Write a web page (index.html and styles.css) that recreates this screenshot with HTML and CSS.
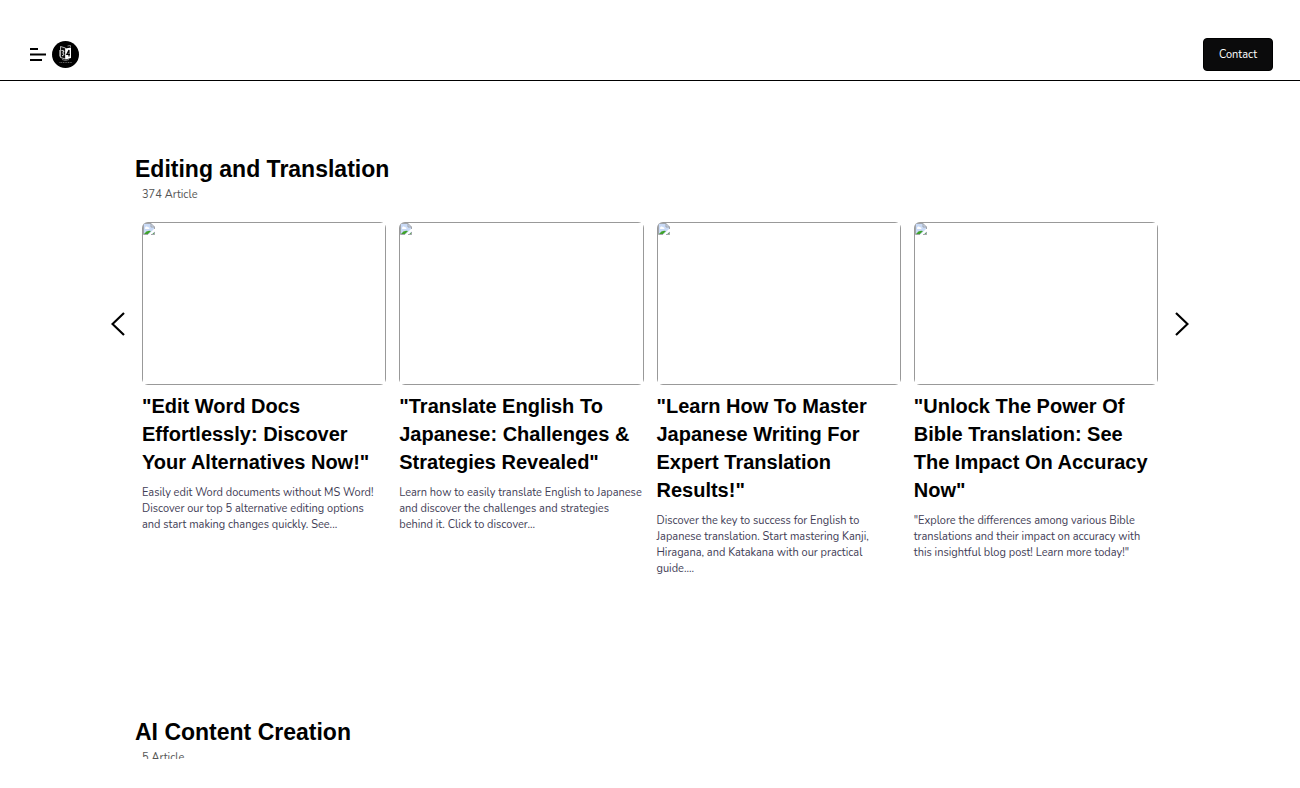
FILE: index.html
```html
<!DOCTYPE html>
<html lang="en">
<head>
<meta charset="utf-8">
<meta name="viewport" content="width=device-width, initial-scale=1">
<title>Articles</title>
<link rel="stylesheet" href="styles.css">
</head>
<body>
<svg class="symbols" aria-hidden="true">
  <symbol id="missing" viewBox="0 0 12 12">
    <path d="M.5.5H8L11.500 4V11.500H.5Z" fill="#c9daf6"/>
    <path d="M2 5.500C2 3.500 4 3 5 4.200C6.500 4 7.200 5.500 6 6H2.500Z" fill="#fff"/>
    <path d="M1 11Q4 6.500 8 8L5 11Z" fill="#3fa229"/>
    <path d="M5 12L12 5V8L8 12Z" fill="#fff"/>
    <path d="M9 11.500L11.500 9V11.500Z" fill="#55a847"/>
    <path d="M.5 11.500V.5H8L11.500 4V6M8 .5V4H11.500M.5 11.500H5M8 11.500H11.500V9" fill="none" stroke="#a3a6ab"/>
  </symbol>
</svg>
<div class="page">
  <header class="topbar">
    <div class="brand">
      <button class="plain" aria-label="Menu">
        <svg width="16" height="14" viewBox="0 0 16 14"><path d="M0 1H8M0 6.500H16M0 12H12" stroke="#000" stroke-width="2"/></svg>
      </button>
      <a class="logo" href="#" aria-label="Home">
        <svg width="27" height="27" viewBox="0 0 27 27">
          <circle cx="13.500" cy="13.500" r="13.500" fill="#000"/>
          <path d="M8.500 5.500L13.500 7V18L8.500 16.500Z" fill="#111" stroke="#ddd" stroke-width=".8"/>
          <path d="M13.500 7.500L19 6.500V17L13.500 18.500Z" fill="#fff"/>
          <path d="M9.500 9.500L12 10L10.800 12L12 13.500L10 15" fill="none" stroke="#eee"/>
          <path d="M17 15.500V9L14.800 13.500H18" fill="none" stroke="#000" stroke-width="1.200"/>
          <path d="M15.500 5L18.500 4.500V6M7.500 9V15L9 16.500" fill="none" stroke="#bbb" stroke-width=".7"/>
          <path d="M10 18.500L13.500 19.500L17 18.500" fill="none" stroke="#aaa" stroke-width=".7"/>
          <path d="M7.500 21.500H20" stroke="#666" stroke-width="1" stroke-dasharray="1 .7"/>
        </svg>
      </a>
    </div>
    <button class="contact">Contact</button>
  </header>
  <main class="content">
    <section class="category">
      <h1 class="category-title">Editing and Translation</h1>
      <p class="count">374 Article</p>
      <div class="carousel">
        <button class="plain arrow" aria-label="Previous"><svg width="14" height="24" viewBox="0 0 14 24"><path d="M13 1L1.500 12L13 23" fill="none" stroke="#000" stroke-width="2.200"/></svg></button>
        <div class="cards">
          <article class="card">
            <div class="thumb"><svg class="missing"><use href="#missing"/></svg></div>
            <h2 class="card-title">"Edit Word Docs Effortlessly: Discover Your Alternatives Now!"</h2>
            <p class="summary">Easily edit Word documents without MS Word!<br>Discover our top 5 alternative editing options<br>and start making changes quickly. See...</p>
          </article>
          <article class="card">
            <div class="thumb"><svg class="missing"><use href="#missing"/></svg></div>
            <h2 class="card-title">"Translate English To Japanese: Challenges &amp; Strategies Revealed"</h2>
            <p class="summary">Learn how to easily translate English to Japanese<br>and discover the challenges and strategies<br>behind it. Click to discover...</p>
          </article>
          <article class="card">
            <div class="thumb"><svg class="missing"><use href="#missing"/></svg></div>
            <h2 class="card-title">"Learn How To Master Japanese Writing For Expert Translation Results!"</h2>
            <p class="summary">Discover the key to success for English to<br>Japanese translation. Start mastering Kanji,<br>Hiragana, and Katakana with our practical<br>guide....</p>
          </article>
          <article class="card">
            <div class="thumb"><svg class="missing"><use href="#missing"/></svg></div>
            <h2 class="card-title">"Unlock The Power Of Bible Translation: See The Impact On Accuracy Now"</h2>
            <p class="summary">"Explore the differences among various Bible<br>translations and their impact on accuracy with<br>this insightful blog post! Learn more today!"</p>
          </article>
        </div>
        <button class="plain arrow" aria-label="Next"><svg width="14" height="24" viewBox="0 0 14 24"><path d="M1 1L12.500 12L1 23" fill="none" stroke="#000" stroke-width="2.200"/></svg></button>
      </div>
    </section>
    <section class="category">
      <h1 class="category-title">AI Content Creation</h1>
      <p class="count">5 Article</p>
    </section>
  </main>
</div>
</body>
</html>
```
FILE: styles.css
```css
* { box-sizing: border-box; }
body {
  margin: 0;
  padding-bottom: 29px;
  height: 100vh;
  background: #fff;
  color: #000;
  font-family: Nunito, "Open Sans", sans-serif;
  font-size: 11px;
}
h1, h2, p { margin: 0; }
.symbols { display: none; }
.page { height: 100%; overflow: hidden; }
.plain {
  display: flex;
  padding: 0;
  border: 0;
  background: none;
  cursor: pointer;
}
.topbar {
  display: flex;
  align-items: center;
  justify-content: space-between;
  padding: 38px 27px 9px 30px;
  border-bottom: 1px solid #000;
}
.brand { display: flex; align-items: center; gap: 6px; }
.logo { display: flex; }
.contact {
  height: 33px;
  padding: 0 15px;
  border: 1px solid #000;
  border-radius: 4px;
  background: #0b0b0c;
  color: #fff;
  font: inherit;
  cursor: pointer;
}
.content {
  max-width: 1078px;
  margin: 0 auto;
  padding-top: 72px;
}
.category { padding-bottom: 139px; }
.category-title {
  padding-left: 24px;
  font: bold 23px/32px "Liberation Sans", Arial, sans-serif;
}
.count {
  padding-left: 31px;
  color: #555;
  line-height: 20px;
}
.carousel {
  display: flex;
  align-items: flex-start;
  gap: 17px;
  margin-top: 17px;
}
.arrow { flex: none; margin-top: 90px; }
.cards {
  display: grid;
  flex: 1;
  grid-template-columns: repeat(4, minmax(0, 1fr));
  gap: 13px;
}
.thumb {
  position: relative;
  aspect-ratio: 3 / 2;
  border-radius: 6px;
  overflow: hidden;
}
.thumb::after {
  content: "";
  position: absolute;
  inset: 0;
  border: 1px solid #999;
}
.missing { display: block; width: 12px; height: 12px; margin: 1px; }
.card-title {
  margin-top: 7px;
  font: bold 20px/28px "Liberation Sans", Arial, sans-serif;
}
.summary {
  margin-top: 9px;
  color: #3f3d56;
  line-height: 16px;
  white-space: nowrap;
}
```
